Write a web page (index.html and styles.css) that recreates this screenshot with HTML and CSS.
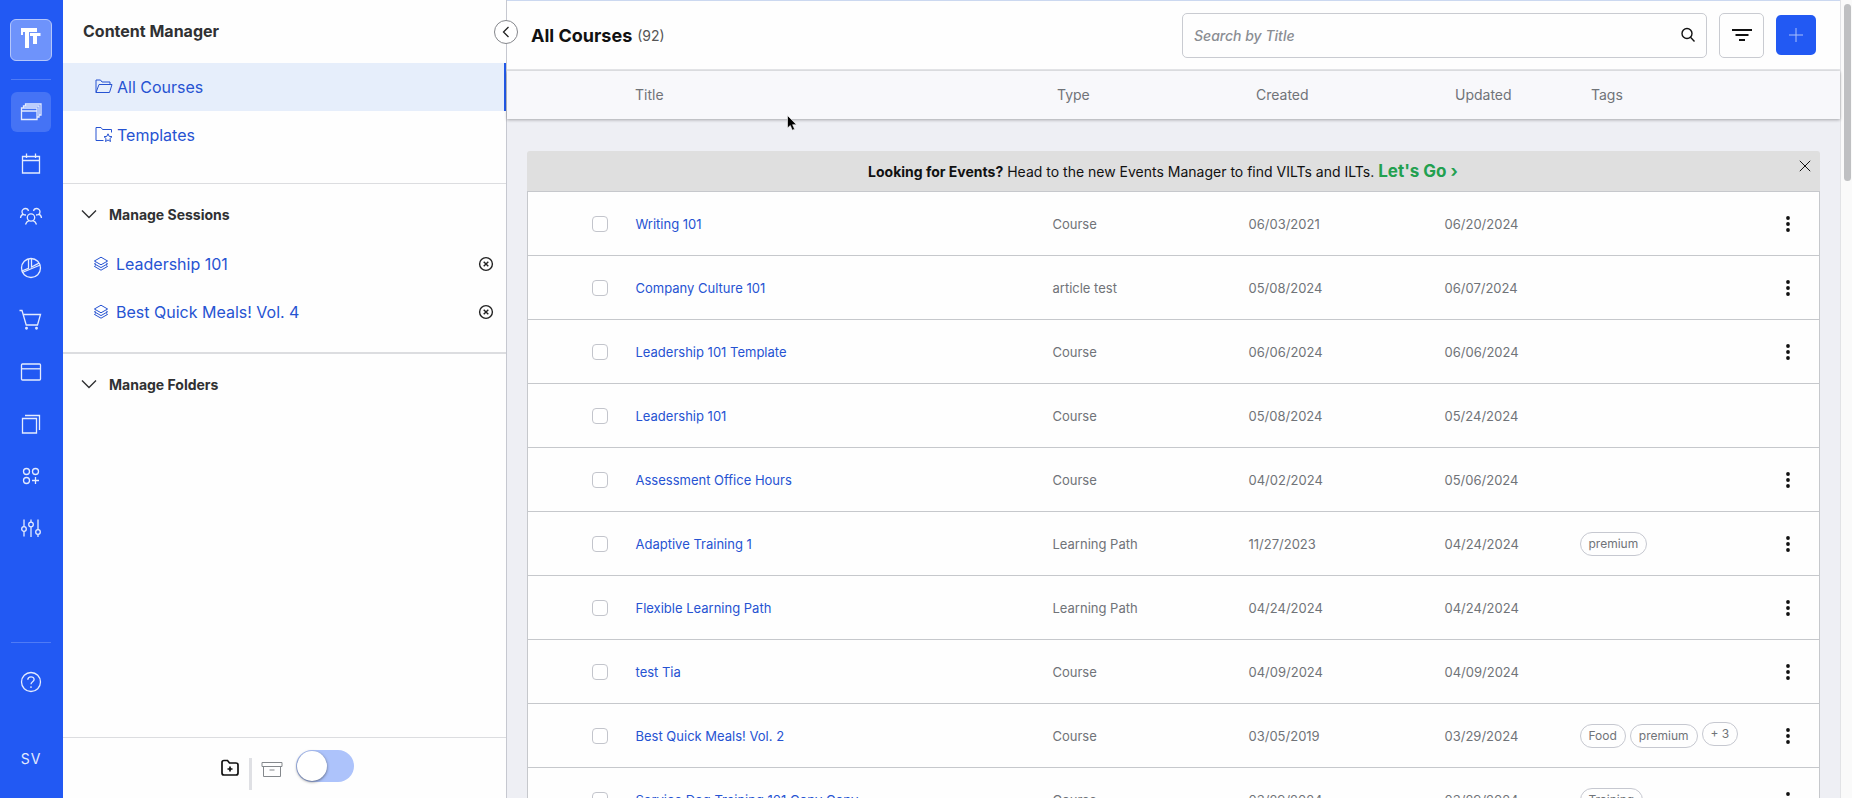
FILE: index.html
```html
<!DOCTYPE html>
<html lang="en">
<head>
    <meta charset="UTF-8">
    <meta name="viewport" content="width=device-width, initial-scale=1.0">
    <title>Content Manager</title>
    <link rel="stylesheet" href="styles.css">
</head>
<body>
    <!-- Shared icons -->
    <svg class="sprite" aria-hidden="true">
        <symbol id="kebab" viewBox="0 0 16 16"><circle cx="8" cy="2" r="1.900"/><circle cx="8" cy="8" r="1.900"/><circle cx="8" cy="14" r="1.900"/></symbol>
        <symbol id="layers" viewBox="0 0 16 16"><path d="M8 1.2 14.6 5 8 8.8 1.4 5zM2.8 7 1.4 7.8 8 11.6l6.600-3.800L13.200 7M2.800 9.600 1.400 10.400 8 14.200l6.600-3.800-1.400-.8"/></symbol>
        <symbol id="chevron" viewBox="0 0 16 16"><path d="m1 4.500 7 7 7-7"/></symbol>
        <symbol id="remove" viewBox="0 0 16 16"><circle cx="8" cy="8" r="6.400"/><path d="m5.700 5.700 4.600 4.600m0-4.600-4.600 4.600"/></symbol>
    </svg>

    <div class="app">
        <!-- Icon rail -->
        <nav class="rail" aria-label="Main">
            <a href="#" class="logo" aria-label="Home">
                <svg width="24" height="24" viewBox="0 0 24 24"><path d="M2 2h16v4H10v16H6V6H4v3H2zM11 7h10.500v3H18v8h-4v-8h-3z" fill="#fff"/></svg>
            </a>
            <hr class="rail-line">
            <a href="#" class="rail-item active" aria-label="Content"><svg width="24" height="24" viewBox="0 0 24 24"><path d="M2.500 8h15.500v11.500H2.500zM2.500 11H18M4.500 8V6h15.500v11H18M6.500 6V4H22v11h-2"/></svg></a>
            <a href="#" class="rail-item" aria-label="Calendar"><svg width="24" height="24" viewBox="0 0 24 24"><path d="M3.500 4.500h17v16.500h-17zM3.500 8.500h17M7.500 1.500v4.500M16.500 1.500v4.500"/></svg></a>
            <a href="#" class="rail-item" aria-label="People"><svg width="24" height="24" viewBox="0 0 24 24"><circle cx="12" cy="13.500" r="3.700"/><path d="M6.500 20.500c.6-2 2-3.400 3.500-3.800M17.500 20.500c-.6-2-2-3.400-3.500-3.800M1.500 14c.2-2 1.300-3.300 3-3.800M22.500 14c-.2-2-1.300-3.300-3-3.800M7 11C4.500 11 3 9.800 3 7.800S4.800 4.500 6.500 4.500 9.200 5.500 9.500 7M17 11c2.500 0 4-1.200 4-3.200S19.200 4.500 17.500 4.500 14.800 5.500 14.500 7"/></svg></a>
            <a href="#" class="rail-item" aria-label="Reports"><svg width="24" height="24" viewBox="0 0 24 24"><circle cx="12" cy="12" r="9.500"/><path d="M12.500 2.500V11l7.500-3.800M9.500 3v9.300L2.700 15M3.200 16.500 21.300 9"/></svg></a>
            <a href="#" class="rail-item" aria-label="Store"><svg width="24" height="24" viewBox="0 0 24 24"><path d="M.5 2.500h2.500l4.200 14.500h11.300l3-10.500H4.200"/><circle cx="7.500" cy="20.300" r=".8"/><circle cx="17.500" cy="20.300" r=".8"/></svg></a>
            <a href="#" class="rail-item" aria-label="Pages"><svg width="24" height="24" viewBox="0 0 24 24"><rect x="2.500" y="4" width="19" height="16" rx="1"/><path d="M2.500 8.800h19"/></svg></a>
            <a href="#" class="rail-item" aria-label="Library"><svg width="24" height="24" viewBox="0 0 24 24"><path d="M3.500 6.500h14V21h-14zM6 3.500h14.500V18"/></svg></a>
            <a href="#" class="rail-item" aria-label="Apps"><svg width="24" height="24" viewBox="0 0 24 24"><circle cx="7.500" cy="7.500" r="3"/><circle cx="16.500" cy="7.500" r="3"/><circle cx="7.500" cy="16.500" r="3"/><path d="M16.500 13v7M13 16.500h7"/></svg></a>
            <a href="#" class="rail-item" aria-label="Settings"><svg width="24" height="24" viewBox="0 0 24 24"><circle cx="5" cy="13" r="2.300"/><circle cx="12" cy="8.500" r="2.300"/><circle cx="19" cy="16" r="2.300"/><path d="M5 3.500v7M5 15.500v5M12 3.500v2.500M12 11v10M19 3.500v10M19 18.500v2.500"/></svg></a>
            <hr class="rail-line rail-bottom">
            <a href="#" class="rail-item" aria-label="Help"><svg width="24" height="24" viewBox="0 0 24 24"><circle cx="12" cy="12" r="9.500"/><path d="M8.800 9.800c.1-4 6.600-3.700 6.300-.2-.2 2.200-3.100 2-3.100 4.600M12 16.300v1.600"/></svg></a>
            <a href="#" class="rail-user">SV</a>
        </nav>

        <!-- Sidebar -->
        <aside class="sidebar">
            <h2 class="sidebar-title">Content Manager</h2>
            <button type="button" class="collapse" aria-label="Collapse sidebar"><svg width="14" height="14" viewBox="0 0 14 14"><path d="M9.500 2 4.500 7l5 5"/></svg></button>

            <ul class="nav-list">
                <li><a href="#" class="nav-link selected"><svg width="18" height="18" viewBox="0 0 18 18"><path d="M1 14.500V2h4.500l1.500 2h8v2.500M1 14.500l3-8h13l-2.500 8z"/></svg>All Courses</a></li>
                <li><a href="#" class="nav-link"><svg width="18" height="18" viewBox="0 0 18 18"><path d="M8.500 14.500H1V1.500h5l1.500 2h9V6.500M13 7.800l1.200 2.600 2.800.3-2.100 1.900.6 2.900-2.500-1.500-2.500 1.500.6-2.900L9 10.700l2.800-.3z"/></svg>Templates</a></li>
            </ul>

            <section class="group">
                <h3 class="group-title"><svg class="chevron" width="16" height="16"><use href="#chevron"/></svg>Manage Sessions</h3>
                <ul class="session-list">
                    <li class="session"><a href="#" class="session-link"><svg width="16" height="16"><use href="#layers"/></svg>Leadership 101</a><button type="button" class="remove" aria-label="Close Leadership 101"><svg width="16" height="16"><use href="#remove"/></svg></button></li>
                    <li class="session"><a href="#" class="session-link"><svg width="16" height="16"><use href="#layers"/></svg>Best Quick Meals! Vol. 4</a><button type="button" class="remove" aria-label="Close Best Quick Meals! Vol. 4"><svg width="16" height="16"><use href="#remove"/></svg></button></li>
                </ul>
            </section>

            <section class="group group-folders">
                <h3 class="group-title"><svg class="chevron" width="16" height="16"><use href="#chevron"/></svg>Manage Folders</h3>
            </section>

            <footer class="sidebar-footer">
                <button type="button" class="new-folder" aria-label="New folder"><svg width="20" height="20" viewBox="0 0 20 20"><path d="M2 4.500C2 3 2.500 2.500 4 2.500h3.500l2 2.500H16c1.500 0 2 .5 2 2v8c0 1.500-.5 2-2 2H4c-1.500 0-2-.5-2-2zM10 8.500v5M7.500 11h5"/></svg></button>
                <span class="footer-line"></span>
                <label for="archived" class="archive" aria-label="Show archived"><svg width="22" height="20" viewBox="0 0 22 20"><path d="M1 2.500h20v4H1zM2.500 6.500h17v10h-17zM8.500 10h5"/></svg></label>
                <input type="checkbox" id="archived" class="toggle">
            </footer>
        </aside>

        <!-- Course list -->
        <main class="main">
            <header class="topbar">
                <h1 class="page-title">All Courses</h1>
                <span class="count">(92)</span>
                <div class="search">
                    <input type="text" class="search-input" placeholder="Search by Title" aria-label="Search by Title">
                    <svg width="16" height="16" viewBox="0 0 16 16"><circle cx="7" cy="6.500" r="5"/><path d="m10.500 10.200 4 4.300"/></svg>
                </div>
                <button type="button" class="filter" aria-label="Filter"><svg width="20" height="14" viewBox="0 0 20 14"><path d="M0 2h20M3.500 7h13M7 12h6"/></svg></button>
                <button type="button" class="add" aria-label="Add"><svg width="14" height="14" viewBox="0 0 14 14"><path d="M7 0v14M0 7h14"/></svg></button>
            </header>

            <table class="head-table">
                <colgroup><col class="head-check"><col><col class="head-date"><col class="head-date"><col class="head-updated"><col class="head-tags"></colgroup>
                <thead>
                    <tr><th></th><th>Title</th><th>Type</th><th>Created</th><th>Updated</th><th>Tags</th></tr>
                </thead>
            </table>

            <div class="content">
                <div class="banner">
                    <p class="banner-text"><strong>Looking for Events?</strong> Head to the new Events Manager to find VILTs and ILTs. <a href="#" class="banner-link">Let's Go ›</a></p>
                    <button type="button" class="banner-close" aria-label="Close"><svg width="12" height="12" viewBox="0 0 12 12"><path d="m.8.800 10.400 10.400m0-10.400L.8 11.200"/></svg></button>
                </div>

                <table class="courses">
                    <colgroup><col class="col-check"><col><col class="col-date"><col class="col-date"><col class="col-updated"><col class="col-tags"><col class="col-menu"></colgroup>
                    <tbody>
                        <tr>
                            <td><input type="checkbox" class="check" aria-label="Select Writing 101"></td>
                            <td><a href="#">Writing 101</a></td><td>Course</td><td>06/03/2021</td><td>06/20/2024</td><td></td>
                            <td><button type="button" class="menu" aria-label="More"><svg width="16" height="16"><use href="#kebab"/></svg></button></td>
                        </tr>
                        <tr>
                            <td><input type="checkbox" class="check" aria-label="Select Company Culture 101"></td>
                            <td><a href="#">Company Culture 101</a></td><td>article test</td><td>05/08/2024</td><td>06/07/2024</td><td></td>
                            <td><button type="button" class="menu" aria-label="More"><svg width="16" height="16"><use href="#kebab"/></svg></button></td>
                        </tr>
                        <tr>
                            <td><input type="checkbox" class="check" aria-label="Select Leadership 101 Template"></td>
                            <td><a href="#">Leadership 101 Template</a></td><td>Course</td><td>06/06/2024</td><td>06/06/2024</td><td></td>
                            <td><button type="button" class="menu" aria-label="More"><svg width="16" height="16"><use href="#kebab"/></svg></button></td>
                        </tr>
                        <tr>
                            <td><input type="checkbox" class="check" aria-label="Select Leadership 101"></td>
                            <td><a href="#">Leadership 101</a></td><td>Course</td><td>05/08/2024</td><td>05/24/2024</td><td></td>
                            <td></td>
                        </tr>
                        <tr>
                            <td><input type="checkbox" class="check" aria-label="Select Assessment Office Hours"></td>
                            <td><a href="#">Assessment Office Hours</a></td><td>Course</td><td>04/02/2024</td><td>05/06/2024</td><td></td>
                            <td><button type="button" class="menu" aria-label="More"><svg width="16" height="16"><use href="#kebab"/></svg></button></td>
                        </tr>
                        <tr>
                            <td><input type="checkbox" class="check" aria-label="Select Adaptive Training 1"></td>
                            <td><a href="#">Adaptive Training 1</a></td><td>Learning Path</td><td>11/27/2023</td><td>04/24/2024</td>
                            <td><div class="tags"><span class="tag">premium</span></div></td>
                            <td><button type="button" class="menu" aria-label="More"><svg width="16" height="16"><use href="#kebab"/></svg></button></td>
                        </tr>
                        <tr>
                            <td><input type="checkbox" class="check" aria-label="Select Flexible Learning Path"></td>
                            <td><a href="#">Flexible Learning Path</a></td><td>Learning Path</td><td>04/24/2024</td><td>04/24/2024</td><td></td>
                            <td><button type="button" class="menu" aria-label="More"><svg width="16" height="16"><use href="#kebab"/></svg></button></td>
                        </tr>
                        <tr>
                            <td><input type="checkbox" class="check" aria-label="Select test Tia"></td>
                            <td><a href="#">test Tia</a></td><td>Course</td><td>04/09/2024</td><td>04/09/2024</td><td></td>
                            <td><button type="button" class="menu" aria-label="More"><svg width="16" height="16"><use href="#kebab"/></svg></button></td>
                        </tr>
                        <tr>
                            <td><input type="checkbox" class="check" aria-label="Select Best Quick Meals! Vol. 2"></td>
                            <td><a href="#">Best Quick Meals! Vol. 2</a></td><td>Course</td><td>03/05/2019</td><td>03/29/2024</td>
                            <td><div class="tags"><span class="tag">Food</span><span class="tag">premium</span><button type="button" class="tag more-tags">+ 3</button></div></td>
                            <td><button type="button" class="menu" aria-label="More"><svg width="16" height="16"><use href="#kebab"/></svg></button></td>
                        </tr>
                        <tr>
                            <td><input type="checkbox" class="check" aria-label="Select Service Dog Training 101 Copy Copy"></td>
                            <td><a href="#">Service Dog Training 101 Copy Copy</a></td><td>Course</td><td>03/29/2024</td><td>03/29/2024</td>
                            <td><div class="tags"><span class="tag">Training</span></div></td>
                            <td><button type="button" class="menu" aria-label="More"><svg width="16" height="16"><use href="#kebab"/></svg></button></td>
                        </tr>
                    </tbody>
                </table>
            </div>
        </main>

        <div class="scroll-track"><div class="scroll-thumb"></div></div>
    </div>

    <!-- Mouse pointer -->
    <svg class="pointer" width="12" height="18" viewBox="0 0 12 18"><path d="M.5.500v12.500l2.800-2.500 2 4.700 2.300-1-2-4.500h3.900z" fill="#000" stroke="#fff" stroke-width=".6"/></svg>
</body>
</html>
```

FILE: styles.css
```css
* {
    box-sizing: border-box;
}

body {
    margin: 0;
    font-family: Inter, "Liberation Sans", sans-serif;
    font-size: 13px;
    color: #303133;
    background-color: #eeeff4;
    overflow: hidden;
}

h1, h2, h3, p, ul {
    margin: 0;
    padding: 0;
}

ul {
    list-style: none;
}

a {
    color: #2653d2;
    text-decoration: none;
}

button {
    display: flex;
    align-items: center;
    justify-content: center;
    padding: 0;
    border: none;
    background: none;
    font-family: inherit;
    cursor: pointer;
}

svg {
    flex: none;
    fill: none;
    stroke: currentColor;
}

.sprite {
    position: absolute;
    width: 0;
    height: 0;
}

.app {
    display: flex;
    height: 100vh;
}

/* Icon rail */
.rail {
    display: flex;
    flex-direction: column;
    align-items: center;
    gap: 12px;
    flex: none;
    width: 63px;
    padding: 19px 1px 31px 0;
    background-color: #2259f3;
}

.logo {
    display: flex;
    justify-content: center;
    width: 42px;
    height: 42px;
    margin-bottom: 6px;
    padding-top: 6px;
    border: 1px solid #b5c7fb;
    border-radius: 6px;
    background-color: #6e93fb;
}

.logo svg {
    stroke: none;
}

.rail-line {
    width: 40px;
    height: 1px;
    margin: 0;
    border: none;
    background-color: #4f7bf6;
}

.rail-bottom {
    margin: auto 0 7px;
}

.rail-item {
    display: flex;
    align-items: center;
    justify-content: center;
    width: 40px;
    height: 40px;
    border-radius: 6px;
    color: #e4ebfe;
    stroke-width: 1.3;
}

.rail-item.active {
    background-color: #4573f5;
}

.rail-user {
    margin-top: 37px;
    color: #e4ebfe;
    font-size: 14px;
    line-height: 16px;
    letter-spacing: 1px;
}

/* Sidebar */
.sidebar {
    position: relative;
    display: flex;
    flex-direction: column;
    flex: none;
    width: 444px;
    border-right: 1px solid #c6c8d0;
    background-color: #fefefe;
}

.sidebar-title {
    padding: 0 20px;
    font-size: 16px;
    font-weight: 700;
    line-height: 63px;
}

.collapse {
    position: absolute;
    top: 20px;
    right: -12px;
    width: 24px;
    height: 24px;
    border: 1px solid #85878c;
    border-radius: 50%;
    background-color: #fff;
    color: #222;
    stroke-width: 1.3;
    z-index: 1;
}

.nav-list {
    padding-bottom: 24px;
}

.nav-link {
    display: flex;
    align-items: center;
    gap: 4px;
    height: 48px;
    padding-left: 32px;
    font-size: 16px;
}

.nav-link.selected {
    border-right: 2px solid #2259e8;
    background-color: #e6eefb;
}

.group {
    padding: 4px 0 16px;
    border-top: 1px solid #dcdde0;
}

.group-folders {
    border-top-width: 2px;
}

.group-title {
    display: flex;
    align-items: center;
    gap: 12px;
    height: 52px;
    padding-left: 18px;
    font-size: 14px;
    font-weight: 700;
}

.chevron {
    stroke-width: 1.4;
}

.session {
    display: flex;
    align-items: center;
    justify-content: space-between;
    height: 48px;
    padding: 0 12px 0 30px;
}

.session-link {
    display: flex;
    align-items: center;
    gap: 7px;
    font-size: 16px;
}

.remove {
    color: #222;
    stroke-width: 1.4;
}

.sidebar-footer {
    display: flex;
    align-items: center;
    justify-content: center;
    height: 61px;
    margin-top: auto;
    padding-left: 4px;
    border-top: 1px solid #dcdde0;
}

.new-folder {
    color: #111;
    stroke-width: 1.7;
}

.footer-line {
    width: 3px;
    height: 32px;
    margin: 12px 9px 0 9px;
    background-color: #dfe0e4;
}

.archive {
    display: flex;
    margin-right: 13px;
    padding-top: 3px;
    color: #84888c;
}

.toggle {
    appearance: none;
    width: 58px;
    height: 32px;
    margin: 0 0 4px;
    padding: 1px;
    border-radius: 16px;
    background-color: #adc3fb;
    cursor: pointer;
}

.toggle::before {
    content: "";
    display: block;
    width: 30px;
    height: 30px;
    border-radius: 50%;
    background-color: #fff;
    box-shadow: 0 1px 3px rgba(0, 0, 0, 0.5);
}

/* Top bar */
.main {
    flex: 1;
    min-width: 0;
    border-top: 1px solid #cbd8f0;
}

.topbar {
    display: flex;
    align-items: center;
    height: 70px;
    padding: 0 24px;
    border-bottom: 2px solid #e6e7ea;
    background-color: #fefefe;
}

.page-title {
    color: #111;
    font-size: 18px;
    font-weight: 700;
}

.count {
    margin-left: 5px;
    color: #555;
    font-size: 14px;
}

.search {
    display: flex;
    align-items: center;
    width: 525px;
    height: 45px;
    margin-left: auto;
    padding: 0 10px 0 11px;
    border: 1px solid #c9cbd1;
    border-radius: 5px;
    color: #111;
    stroke-width: 1.4;
}

.search-input {
    flex: 1;
    min-width: 0;
    padding: 0;
    border: none;
    outline: none;
    background: none;
    font-family: inherit;
    font-size: 14px;
    font-style: italic;
    font-weight: 500;
}

.search-input::placeholder {
    color: #8a8d93;
}

.filter {
    width: 45px;
    height: 45px;
    margin: 0 12px;
    border: 1px solid #c9cbd1;
    border-radius: 5px;
    color: #111;
    stroke-width: 2;
}

.add {
    width: 40px;
    height: 40px;
    border-radius: 5px;
    background-color: #2259f3;
    color: #a9c0fb;
}

/* Column headings */
table {
    width: 100%;
    table-layout: fixed;
    border-collapse: collapse;
}

th, td {
    padding: 0;
    text-align: left;
}

.head-table {
    position: relative;
    height: 48px;
    background-color: #f8f8fb;
    box-shadow: 0 1px 3px rgba(0, 0, 0, 0.3);
}

.head-table th {
    padding-bottom: 2px;
    color: #707378;
    font-size: 14px;
    font-weight: 400;
}

.head-check {
    width: 128px;
}

.head-date {
    width: 199px;
}

.head-updated {
    width: 136px;
}

.head-tags {
    width: 249px;
}

/* Banner and rows */
.content {
    padding: 32px 20px;
}

.banner {
    display: flex;
    height: 40px;
    padding-right: 9px;
    border-radius: 3px 3px 0 0;
    background-color: #dfdfdf;
}

.banner-text {
    flex: 1;
    color: #111;
    font-size: 14px;
    line-height: 40px;
    text-align: center;
}

.banner-text strong {
    font-weight: 700;
}

.banner-link {
    color: #22a04f;
    font-size: 17px;
    font-weight: 700;
}

.banner-close {
    width: 12px;
    height: 30px;
    color: #111;
}

.courses {
    border: 1px solid #c6c8cc;
    background-color: #fefefe;
}

.courses tr {
    height: 64px;
    border-top: 1px solid #c6c8cc;
}

.courses td {
    color: #707378;
}

.col-check {
    width: 108px;
}

.col-date {
    width: 196px;
}

.col-updated {
    width: 135px;
}

.col-tags {
    width: 176px;
}

.col-menu {
    width: 64px;
}

.check {
    display: block;
    appearance: none;
    width: 16px;
    height: 16px;
    margin: 0 0 0 64px;
    border: 1px solid #c3c5cc;
    border-radius: 4px;
    background-color: #fff;
}

.tags {
    display: flex;
    align-items: center;
    gap: 4px;
}

.tag {
    padding: 0 8px;
    border: 1px solid #c6c8d0;
    border-radius: 12px;
    color: #707378;
    font-size: 12px;
    line-height: 22px;
}

.more-tags {
    margin-bottom: 3px;
}

.menu {
    width: 64px;
    height: 32px;
    color: #111;
}

.menu svg {
    fill: currentColor;
    stroke: none;
}

/* Page scrollbar */
.scroll-track {
    flex: none;
    width: 12px;
    padding: 4px 1px 0 3px;
    border-left: 1px solid #e2e3e6;
    background-color: #fafafa;
}

.scroll-thumb {
    height: 177px;
    border-radius: 4px;
    background-color: #bfc0c2;
}

.pointer {
    position: absolute;
    top: 115px;
    left: 787px;
}
```
